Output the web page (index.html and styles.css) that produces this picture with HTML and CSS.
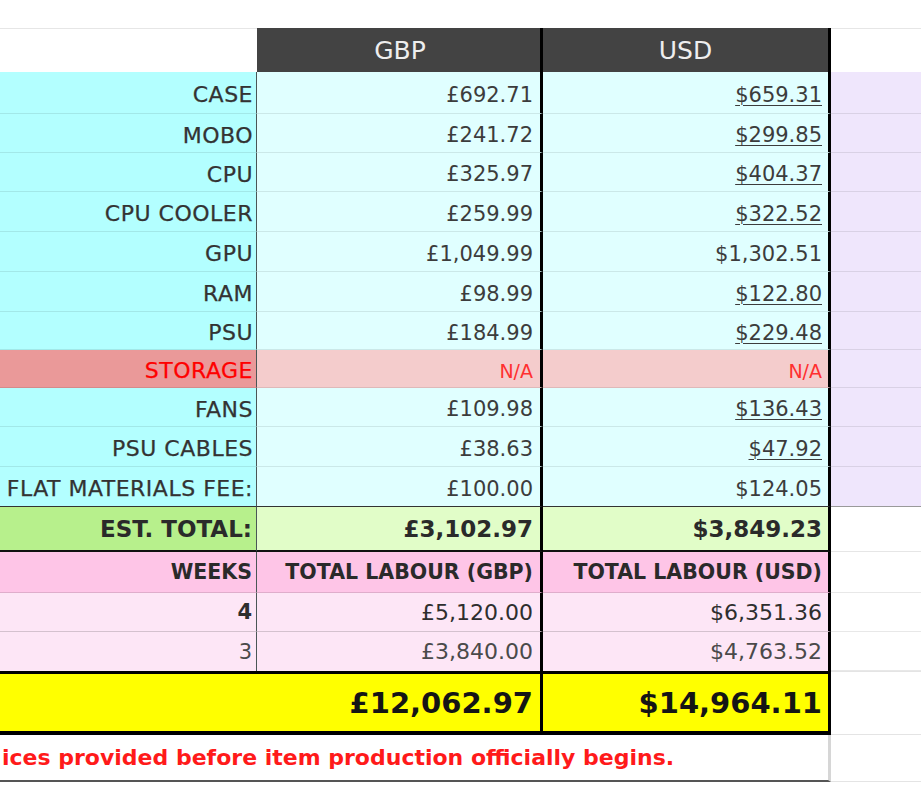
FILE: index.html
```html
<!DOCTYPE html>
<html>
<head>
<meta charset="utf-8">
<title>Build estimate</title>
<link rel="stylesheet" href="styles.css">
</head>
<body>
<div class="sheet">
  <div class="row head">
    <div class="c blank"></div>
    <div class="c hdr gbp">GBP</div>
    <div class="c hdr usd">USD</div>
    <div class="c side blank"></div>
  </div>

  <div class="row item h42">
    <div class="c lbl">CASE</div>
    <div class="c val gbp">£692.71</div>
    <div class="c val usd"><span class="u">$659.31</span></div>
    <div class="c side purple"></div>
  </div>
  <div class="row item h39">
    <div class="c lbl">MOBO</div>
    <div class="c val gbp">£241.72</div>
    <div class="c val usd"><span class="u">$299.85</span></div>
    <div class="c side purple"></div>
  </div>
  <div class="row item h39">
    <div class="c lbl">CPU</div>
    <div class="c val gbp">£325.97</div>
    <div class="c val usd"><span class="u">$404.37</span></div>
    <div class="c side purple"></div>
  </div>
  <div class="row item h40">
    <div class="c lbl">CPU COOLER</div>
    <div class="c val gbp">£259.99</div>
    <div class="c val usd"><span class="u">$322.52</span></div>
    <div class="c side purple"></div>
  </div>
  <div class="row item h40">
    <div class="c lbl">GPU</div>
    <div class="c val gbp">£1,049.99</div>
    <div class="c val usd">$1,302.51</div>
    <div class="c side purple"></div>
  </div>
  <div class="row item h40">
    <div class="c lbl">RAM</div>
    <div class="c val gbp">£98.99</div>
    <div class="c val usd"><span class="u">$122.80</span></div>
    <div class="c side purple"></div>
  </div>
  <div class="row item h38">
    <div class="c lbl">PSU</div>
    <div class="c val gbp">£184.99</div>
    <div class="c val usd"><span class="u">$229.48</span></div>
    <div class="c side purple"></div>
  </div>
  <div class="row item h38 na">
    <div class="c lbl">STORAGE</div>
    <div class="c val gbp">N/A</div>
    <div class="c val usd">N/A</div>
    <div class="c side purple"></div>
  </div>
  <div class="row item h39">
    <div class="c lbl">FANS</div>
    <div class="c val gbp">£109.98</div>
    <div class="c val usd"><span class="u">$136.43</span></div>
    <div class="c side purple"></div>
  </div>
  <div class="row item h40">
    <div class="c lbl">PSU CABLES</div>
    <div class="c val gbp">£38.63</div>
    <div class="c val usd"><span class="u">$47.92</span></div>
    <div class="c side purple"></div>
  </div>
  <div class="row item h39 last">
    <div class="c lbl">FLAT MATERIALS FEE:</div>
    <div class="c val gbp">£100.00</div>
    <div class="c val usd">$124.05</div>
    <div class="c side purple"></div>
  </div>

  <div class="row est">
    <div class="c lbl">EST. TOTAL:</div>
    <div class="c val gbp">£3,102.97</div>
    <div class="c val usd">$3,849.23</div>
    <div class="c side"></div>
  </div>

  <div class="row weeks">
    <div class="c lbl">WEEKS</div>
    <div class="c val gbp">TOTAL LABOUR (GBP)</div>
    <div class="c val usd">TOTAL LABOUR (USD)</div>
    <div class="c side"></div>
  </div>
  <div class="row labour h39">
    <div class="c lbl">4</div>
    <div class="c val gbp">£5,120.00</div>
    <div class="c val usd">$6,351.36</div>
    <div class="c side"></div>
  </div>
  <div class="row labour h39 soft">
    <div class="c lbl">3</div>
    <div class="c val gbp">£3,840.00</div>
    <div class="c val usd">$4,763.52</div>
    <div class="c side"></div>
  </div>

  <div class="row grand">
    <div class="c val gbp wide">£12,062.97</div>
    <div class="c val usd">$14,964.11</div>
    <div class="c side"></div>
  </div>

  <div class="row foot">
    <div class="c note">ices provided before item production officially begins.</div>
    <div class="c side"></div>
  </div>
</div>
</body>
</html>
```

FILE: styles.css
```css
html, body {
  margin: 0;
  padding: 0;
  background: #ffffff;
}

body {
  font-family: "DejaVu Sans", "Liberation Sans", sans-serif;
  color: #333333;
}

.sheet {
  padding-top: 28px;
  width: 921px;
}

.row {
  display: grid;
  grid-template-columns: 257px 286px 288px 1fr;
}

.c {
  box-sizing: border-box;
  display: flex;
  align-items: center;
  justify-content: flex-end;
  overflow: hidden;
  white-space: nowrap;
}

.gbp {
  border-right: 3px solid #000000;
  padding-right: 7px;
}

.usd {
  border-right: 3px solid #000000;
  padding-right: 6px;
}

.lbl {
  border-right: 1px solid #4a5656;
  padding-right: 4px;
}

/* header */
.head {
  height: 44px;
}

.blank {
  border-top: 1px solid #e6e6e6;
  background: #ffffff;
}

.hdr {
  background: #434343;
  color: #eeeeee;
  justify-content: center;
  font-size: 25px;
  padding-right: 0;
  padding-left: 0;
}

.hdr.gbp {
  padding-left: 3px;
}

/* item rows */
.h38 { height: 38px; }
.h39 { height: 39px; }
.h40 { height: 40px; }
.h42 { height: 42px; }

.item .c {
  border-bottom: 1px solid rgba(0, 0, 0, 0.09);
  font-size: 21px;
  padding-top: 4px;
}

.item .lbl {
  background: #b3ffff;
  color: #333333;
  font-size: 22px;
  letter-spacing: 0.5px;
  padding-right: 3px;
  -webkit-text-stroke: 0.25px #333333;
}

.item .val {
  background: #e0ffff;
  color: #3c3c3c;
}

.item .side {
  padding-top: 0;
}

.purple {
  background: #efe6fc;
}

.u {
  text-decoration: underline;
  text-underline-offset: 3px;
  text-decoration-thickness: 1px;
}

.item.na .lbl {
  background: #ea9999;
  color: #ff0000;
  -webkit-text-stroke: 0.25px #ff0000;
}

.item.na .val {
  background: #f4cccc;
  color: #ff3030;
  font-size: 19px;
}

.item.last .c {
  border-bottom: none;
}

/* est total */
.est {
  height: 46px;
}

.est .c {
  border-top: 1px solid #333333;
  border-bottom: 2px solid #111111;
  font-weight: bold;
  font-size: 23px;
  color: #2a2a2a;
}

.est .lbl {
  background: #b7f08c;
}

.est .val {
  background: #e1fdc8;
}

.est .side {
  border-top: 1px solid #9a9a9a;
  border-bottom: 1px solid #e6e6e6;
  background: #ffffff;
}

/* labour */
.weeks {
  height: 41px;
}

.weeks .c {
  background: #fec5e7;
  font-weight: bold;
  font-size: 20.5px;
  color: #2a2a2a;
  border-bottom: 1px solid rgba(0, 0, 0, 0.12);
}

.labour .c {
  background: #fde6f6;
  font-size: 22px;
  color: #2e2e2e;
  border-bottom: 1px solid rgba(0, 0, 0, 0.16);
}

.labour .lbl {
  font-weight: bold;
  font-size: 21px;
}

.labour.soft .c {
  color: #4a4a4a;
  border-bottom: none;
}

.labour.soft .lbl {
  font-weight: normal;
}

.weeks .c.side,
.labour .c.side {
  background: #ffffff;
  border-bottom: 1px solid #e8e8e8;
}

/* grand total */
.grand {
  height: 64px;
}

.grand .c {
  background: #ffff00;
  border-top: 3px solid #000000;
  border-bottom: 4px solid #000000;
  font-weight: bold;
  font-size: 29px;
  color: #151515;
}

.grand .wide {
  grid-column: 1 / 3;
}

.grand .c.side {
  background: #ffffff;
  border-top: 1px solid #e4e4e4;
  border-bottom: 1px solid #e4e4e4;
}

/* footnote */
.foot {
  height: 47px;
}

.note {
  grid-column: 1 / 4;
  justify-content: flex-start;
  padding-left: 2px;
  color: #ff1a1a;
  font-weight: bold;
  font-size: 22px;
  border-bottom: 2px solid #555555;
  border-right: 3px solid #d6d6d6;
}

.foot .side {
  border-bottom: 1px solid #e4e4e4;
}
```
